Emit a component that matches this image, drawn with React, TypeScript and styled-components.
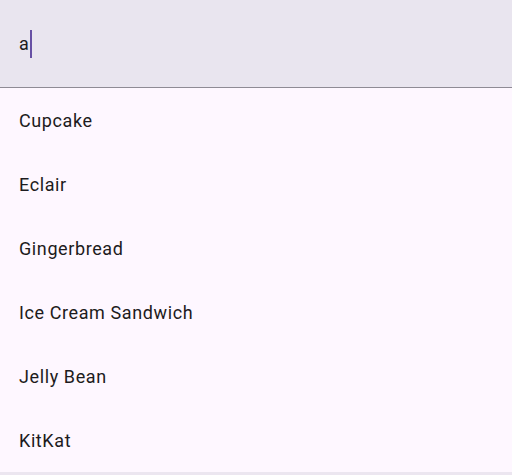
import React, { useState } from 'react'
import styled, { createGlobalStyle } from 'styled-components'

const GlobalStyle = createGlobalStyle`
  html, body {
    margin: 0;
    padding: 0;
    background: #ece6f0;
  }
  body {
    font-family: Roboto, "Noto Sans", Arial, sans-serif;
    color: #1d1b20;
  }
`

const SearchBar = styled.div`
  align-items: center;
  background: #e9e5ef;
  border-bottom: 1px solid #8f8b95;
  box-sizing: border-box;
  display: flex;
  height: 88px;
  padding: 0 19px;
`

const Query = styled.span`
  font-size: 18px;
  letter-spacing: 0.6px;
  line-height: 24px;
`

const Caret = styled.span`
  background: #6750a4;
  display: inline-block;
  height: 28px;
  margin-left: 1px;
  margin-top: 1px;
  width: 2px;
`

const Results = styled.ul`
  background: #fef7ff;
  list-style: none;
  margin: 0;
  padding: 0;
`

const ResultItem = styled.li`
  align-items: center;
  box-sizing: border-box;
  display: flex;
  font-size: 18px;
  height: 64px;
  letter-spacing: 0.6px;
  line-height: 24px;
  padding: 2px 19px 0;
`

const desserts = ['Cupcake', 'Eclair', 'Gingerbread', 'Ice Cream Sandwich', 'Jelly Bean', 'KitKat']

const App = () => {
  const [query] = useState('a')

  return (
    <>
      <GlobalStyle />
      <SearchBar>
        <Query>{query}</Query>
        <Caret />
      </SearchBar>
      <Results>
        {desserts.map(name => (
          <ResultItem key={name}>{name}</ResultItem>
        ))}
      </Results>
    </>
  )
}

export default App
